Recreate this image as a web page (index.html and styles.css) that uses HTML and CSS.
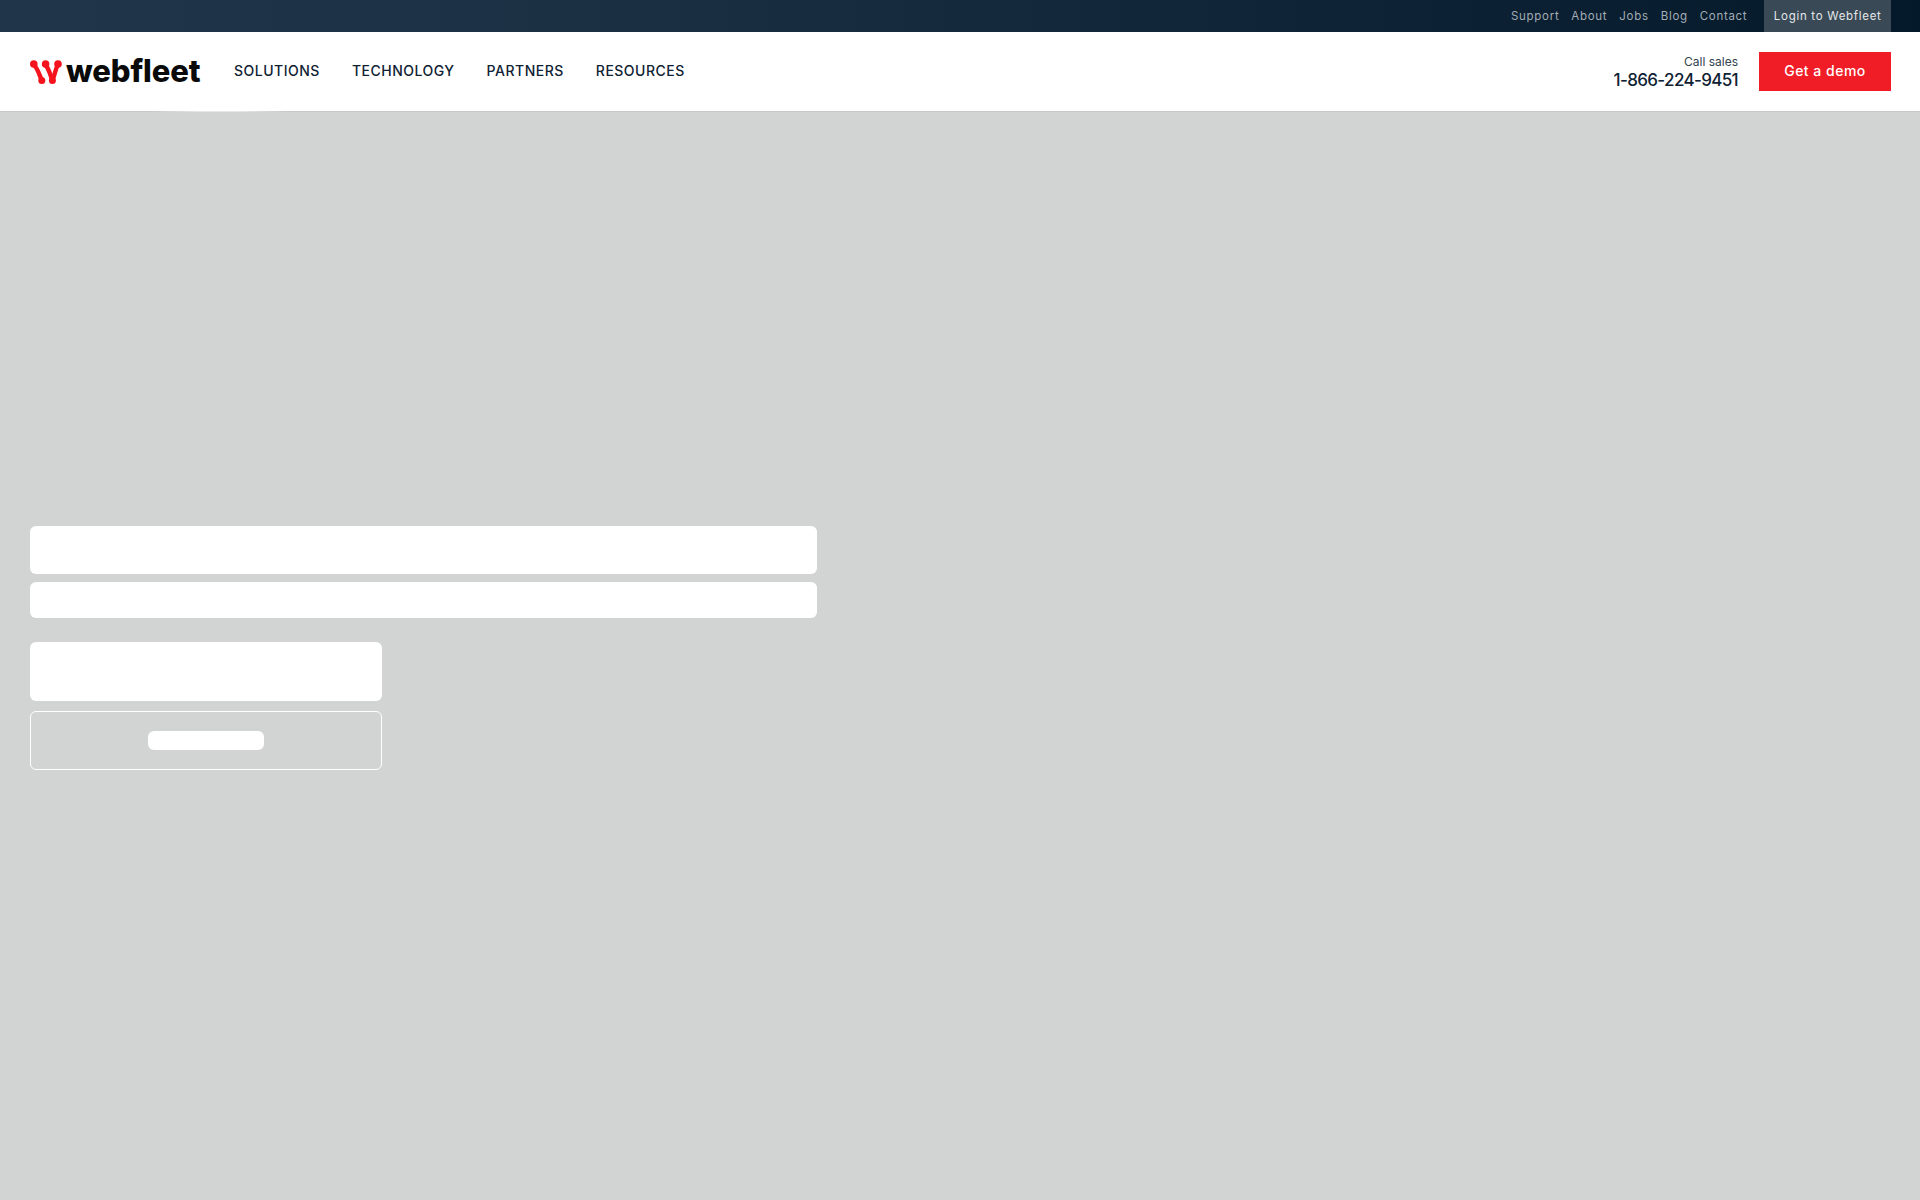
FILE: index.html
```html
<!DOCTYPE html>
<html lang="en">
<head>
<meta charset="utf-8">
<title>Webfleet</title>
<link rel="stylesheet" href="styles.css">
</head>
<body>
<div class="topbar">
  <a class="toplink">Support</a>
  <a class="toplink">About</a>
  <a class="toplink">Jobs</a>
  <a class="toplink">Blog</a>
  <a class="toplink">Contact</a>
  <a class="login">Login to Webfleet</a>
</div>
<header class="header">
  <a class="logo">
    <svg class="logo-mark" width="32" height="24" viewBox="0 0 32 24">
      <circle class="mark-dot" cx="3.8" cy="4" r="3.8" />
      <circle class="mark-dot" cx="15.6" cy="4" r="3.8" />
      <circle class="mark-dot" cx="28" cy="4" r="3.8" />
      <circle class="mark-dot" cx="11.8" cy="20.4" r="3.5" />
      <circle class="mark-dot" cx="22.4" cy="20.4" r="3.5" />
      <path class="mark-line" d="M4 5 C8 9 9 14 11.8 20.5" />
      <path class="mark-line" d="M15.6 5 C19 9 20 14 22.4 20.5" />
      <path class="mark-line" d="M27.6 5 C25.5 10 24.5 15 22.8 19.5" />
    </svg>
    <span class="logo-text">webfleet</span>
  </a>
  <nav class="nav">
    <a class="navlink">SOLUTIONS</a>
    <a class="navlink">TECHNOLOGY</a>
    <a class="navlink">PARTNERS</a>
    <a class="navlink">RESOURCES</a>
  </nav>
  <div class="sales">
    <span class="sales-label">Call sales</span>
    <span class="sales-phone">1-866-224-9451</span>
  </div>
  <a class="demo">Get a demo</a>
</header>
<main class="hero">
  <div class="sk sk-title"></div>
  <div class="sk sk-sub"></div>
  <div class="actions">
    <div class="sk sk-btn"></div>
    <div class="sk-outline"><div class="sk sk-pill"></div></div>
  </div>
</main>
</body>
</html>
```
FILE: styles.css
```css
* { box-sizing: border-box; }
html, body { margin: 0; padding: 0; }
body {
  width: 1920px;
  height: 1200px;
  overflow: hidden;
  background: #d2d4d3;
  font-family: "Inter", "Liberation Sans", sans-serif;
}
.topbar {
  height: 32px;
  display: flex;
  justify-content: flex-end;
  align-items: stretch;
  padding-right: 29px;
  background: linear-gradient(90deg, #203549 0%, #1c3044 30%, #04192a 100%);
}
.toplink {
  display: flex;
  align-items: center;
  margin-right: 12px;
  font-size: 11.5px;
  letter-spacing: 0.7px;
  color: #a3adb5;
}
.login {
  display: flex;
  align-items: center;
  margin-left: 5px;
  padding: 0 9.5px;
  background: #394956;
  font-size: 11.5px;
  letter-spacing: 0.7px;
  color: #e4e7e9;
}
.header {
  height: 80px;
  display: flex;
  align-items: center;
  padding: 0 29px 0 30px;
  background: #fff;
  border-bottom: 1px solid #c6c8c8;
  border-image: linear-gradient(90deg, #c6c8c8 150px, #e6e7e6 200px, #e6e7e6 240px, #c6c8c8 290px) 1;
}
.logo { display: flex; align-items: center; gap: 4px; width: 204px; }
.logo-mark { flex: none; }
.mark-dot { fill: #f5141e; }
.mark-line { fill: none; stroke: #f5141e; stroke-width: 4.4; }
.logo-text {
  font-size: 31px;
  font-weight: 800;
  letter-spacing: -0.1px;
  color: #0a0a0a;
  line-height: 1;
  margin-bottom: 3px;
}
.nav { display: flex; gap: 32px; padding-bottom: 2px; }
.navlink {
  font-size: 14px;
  font-weight: 500;
  letter-spacing: 0.5px;
  color: #0f2233;
}
.sales {
  margin-left: auto;
  margin-right: 21px;
  padding-top: 2px;
  display: flex;
  flex-direction: column;
  align-items: flex-end;
}
.sales-label { font-size: 12px; line-height: 15px; color: #33444f; }
.sales-phone { font-size: 17px; font-weight: 500; line-height: 22px; letter-spacing: -0.65px; color: #0f2233; }
.demo {
  width: 132px;
  height: 39px;
  display: flex;
  align-items: center;
  justify-content: center;
  padding-bottom: 3px;
  background: #f01c26;
  color: #fff;
  font-size: 14px;
  font-weight: 500;
  letter-spacing: 0.5px;
}
.hero {
  padding: 414px 0 0 30px;
}
.sk { background: #fff; border-radius: 6px; }
.sk-title { width: 787px; height: 48px; }
.sk-sub { width: 787px; height: 36px; margin-top: 8px; }
.actions { width: 352px; margin-top: 24px; }
.sk-btn { height: 59px; }
.sk-outline {
  height: 59px;
  margin-top: 10px;
  border: 1px solid #fff;
  border-radius: 6px;
  display: flex;
  align-items: center;
  justify-content: center;
}
.sk-pill { width: 116px; height: 19px; }
```
